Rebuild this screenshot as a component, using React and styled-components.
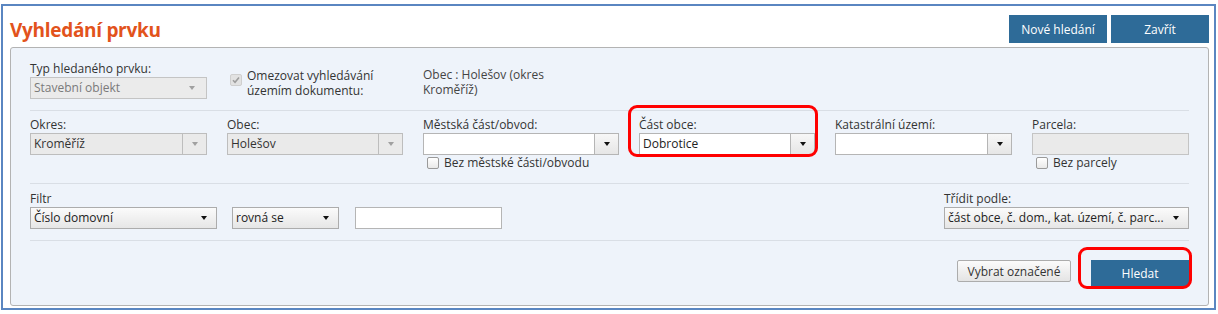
import React from 'react';
import styled, { createGlobalStyle } from 'styled-components';

const GlobalStyle = createGlobalStyle`
  html, body {
    margin: 0;
    background: #fff;
  }
  body {
    font-family: "Open Sans", "Noto Sans", sans-serif;
    font-size: 12px;
    color: #333;
  }
`;

const Frame = styled.div`
  box-sizing: border-box;
  margin: 4px 2px 0 1px;
  height: 306px;
  border: 2px solid #5a86c1;
  padding: 0 5px 2px 7px;
  display: flex;
  flex-direction: column;
`;

const Header = styled.header`
  box-sizing: border-box;
  height: 41px;
  padding-top: 9px;
  display: flex;
  justify-content: space-between;
  align-items: flex-start;
`;

const Title = styled.h1`
  margin: 1px 0 0 0;
  font-size: 19px;
  line-height: 28px;
  font-weight: 700;
  letter-spacing: -0.3px;
  color: #e2531c;
`;

const HeaderActions = styled.div`
  display: flex;
  gap: 4px;
`;

const BlueButton = styled.button`
  box-sizing: border-box;
  width: ${p => p.$w}px;
  height: ${p => p.$h}px;
  border: none;
  background: #2e6b98;
  color: #fff;
  font: inherit;
  font-size: 12px;
  padding: 0;
  cursor: pointer;
`;

const GrayButton = styled.button`
  box-sizing: border-box;
  width: ${p => p.$w}px;
  height: 22px;
  border: 1px solid #acacac;
  border-radius: 2px;
  background: linear-gradient(#fbfbfb, #e4e4e4);
  color: #333;
  font: inherit;
  font-size: 12px;
  padding: 0;
`;

const Panel = styled.section`
  flex: 1;
  display: flex;
  flex-direction: column;
  border: 1px solid #b3b3b3;
  border-radius: 3px;
  background: #eef3fa;
  padding: 0 19px;
`;

const Section = styled.div`
  display: flex;
  align-items: flex-start;
  gap: 20px;
  padding: ${p => p.$pad};
  border-top: ${p => (p.$first ? 'none' : '1px solid #d9dee5')};
  justify-content: ${p => p.$justify || 'flex-start'};
  flex: ${p => (p.$grow ? 1 : 'none')};
`;

const Field = styled.div`
  position: relative;
  display: flex;
  flex-direction: column;
  width: ${p => (p.$w ? `${p.$w}px` : 'auto')};
`;

const Label = styled.label`
  line-height: 16px;
  color: #333;
  white-space: nowrap;
`;

const Controls = styled.div`
  display: flex;
  align-items: center;
`;

const tones = {
  plain: { bg: '#ebebeb', border: '#c4c4c4', text: '#7a7a7a', caret: '#a0a0a0', cell: 'transparent' },
  locked: { bg: '#eaeaea', border: '#bdbdbd', text: '#333', caret: '#a0a0a0', cell: '#eaeaea' },
  open: { bg: '#fff', border: '#b5b5b5', text: '#222', caret: '#111', cell: 'linear-gradient(#f7f7f7, #e6e6e6)' },
  button: { bg: 'linear-gradient(#fbfbfb, #e6e6e6)', border: '#acacac', text: '#222', caret: '#111', cell: 'transparent' },
};

const SelectBox = styled.div`
  box-sizing: border-box;
  width: ${p => (p.$w ? `${p.$w}px` : '100%')};
  height: 22px;
  margin-left: ${p => p.$ml || 0}px;
  display: flex;
  border: 1px solid ${p => tones[p.$tone].border};
  background: ${p => tones[p.$tone].bg};
`;

const SelectValue = styled.span`
  flex: 1;
  padding: 0 3px;
  line-height: 20px;
  white-space: nowrap;
  overflow: hidden;
  color: ${p => tones[p.$tone].text};
`;

const ArrowCell = styled.span`
  width: ${p => p.$cell}px;
  display: flex;
  align-items: center;
  justify-content: center;
  background: ${p => tones[p.$tone].cell};
  border-left: ${p => (p.$split ? `1px solid ${tones[p.$tone].border}` : 'none')};
`;

const Caret = styled.span`
  width: 0;
  height: 0;
  border-left: 3.5px solid transparent;
  border-right: 3.5px solid transparent;
  border-top: 4px solid ${p => tones[p.$tone].caret};
`;

const Select = ({ value, tone = 'open', split, width, offset, cell = 23 }) => (
  <SelectBox $tone={tone} $w={width} $ml={offset}>
    <SelectValue $tone={tone}>{value}</SelectValue>
    <ArrowCell $tone={tone} $split={split} $cell={cell}>
      <Caret $tone={tone} />
    </ArrowCell>
  </SelectBox>
);

const TextInput = styled.div`
  box-sizing: border-box;
  width: ${p => (p.$w ? `${p.$w}px` : '100%')};
  height: 22px;
  margin-left: ${p => p.$ml || 0}px;
  border: 1px solid ${p => (p.$disabled ? '#c4c4c4' : '#b5b5b5')};
  background: ${p => (p.$disabled ? '#eaeaea' : '#fff')};
`;

const CheckRow = styled.div`
  display: flex;
  align-items: center;
  gap: 5px;
  padding-left: ${p => p.$indent}px;
  line-height: 16px;
  color: #333;
  white-space: nowrap;
`;

const Box = styled.span`
  box-sizing: border-box;
  flex: none;
  width: 12px;
  height: 12px;
  border: 1px solid ${p => (p.$disabled ? '#cfcfcf' : '#9a9a9a')};
  border-radius: 2px;
  background: ${p => (p.$disabled ? '#e2e2e2' : 'linear-gradient(#fff, #e9e9e9)')};
  display: flex;
  align-items: center;
  justify-content: center;
`;

const Check = () => (
  <svg width="8" height="8" viewBox="0 0 8 8">
    <path d="M1 4.3 L3 6.3 L7 1.5" fill="none" stroke="#9d9d9d" strokeWidth="1.6" />
  </svg>
);

const Checkbox = ({ checked, disabled }) => (
  <Box $disabled={disabled}>{checked && <Check />}</Box>
);

const Note = styled.div`
  line-height: 15px;
  color: ${p => (p.$muted ? '#444' : '#333')};
  margin-top: ${p => p.$top}px;
  white-space: nowrap;
`;

const Highlight = styled.span`
  position: absolute;
  top: ${p => p.$t}px;
  right: ${p => p.$r}px;
  bottom: ${p => p.$b}px;
  left: ${p => p.$l}px;
  border: 3px solid #f00;
  border-radius: 9px;
  pointer-events: none;
`;

const Spot = styled.div`
  position: relative;
`;

export default function App() {
  return (
    <>
      <GlobalStyle />
      <Frame>
        <Header>
          <Title>Vyhledání prvku</Title>
          <HeaderActions>
            <BlueButton $w={98} $h={28}>Nové hledání</BlueButton>
            <BlueButton $w={98} $h={28}>Zavřít</BlueButton>
          </HeaderActions>
        </Header>

        <Panel>
          <Section $first $pad="13px 0 11px">
            <Field $w={177}>
              <Label>Typ hledaného prvku:</Label>
              <Select value="Stavební objekt" tone="plain" cell={28} />
            </Field>
            <Field $w={176}>
              <CheckRow $indent={3}>
                <Checkbox checked disabled />
                <Note $top={7}>
                  Omezovat vyhledávání
                  <br />
                  územím dokumentu:
                </Note>
              </CheckRow>
            </Field>
            <Field $w={196}>
              <Note $top={6} $muted>
                Obec : Holešov (okres
                <br />
                Kroměříž)
              </Note>
            </Field>
          </Section>

          <Section $pad="6px 0 12px">
            <Field $w={177}>
              <Label>Okres:</Label>
              <Select value="Kroměříž" tone="locked" split />
            </Field>
            <Field $w={176}>
              <Label>Obec:</Label>
              <Select value="Holešov" tone="locked" split />
            </Field>
            <Field $w={196}>
              <Label>Městská část/obvod:</Label>
              <Select value="" split />
              <CheckRow $indent={4}>
                <Checkbox />
                Bez městské části/obvodu
              </CheckRow>
            </Field>
            <Field $w={176}>
              <Label>Část obce:</Label>
              <Select value="Dobrotice" split />
              <Highlight $t={-12} $r={-3} $b={-2} $l={-11} />
            </Field>
            <Field $w={177}>
              <Label>Katastrální území:</Label>
              <Select value="" split />
            </Field>
            <Field $w={157}>
              <Label>Parcela:</Label>
              <TextInput $disabled />
              <CheckRow $indent={4}>
                <Checkbox />
                Bez parcely
              </CheckRow>
            </Field>
          </Section>

          <Section $pad="7px 0 11px" $justify="space-between">
            <Field>
              <Label>Filtr</Label>
              <Controls>
                <Select value="Číslo domovní" tone="button" width={187} cell={24} />
                <Select value="rovná se" tone="button" width={107} offset={15} cell={24} />
                <TextInput $w={147} $ml={16} />
              </Controls>
            </Field>
            <Field $w={245}>
              <Label>Třídit podle:</Label>
              <Select value="část obce, č. dom., kat. území, č. parc..." tone="button" cell={24} />
            </Field>
          </Section>

          <Section $pad="19px 0 0" $justify="flex-end" $grow>
            <GrayButton $w={114}>Vybrat označené</GrayButton>
            <Spot>
              <BlueButton $w={98} $h={26}>Hledat</BlueButton>
              <Highlight $t={-13} $r={-3} $b={-3} $l={-13} />
            </Spot>
          </Section>
        </Panel>
      </Frame>
    </>
  );
}
